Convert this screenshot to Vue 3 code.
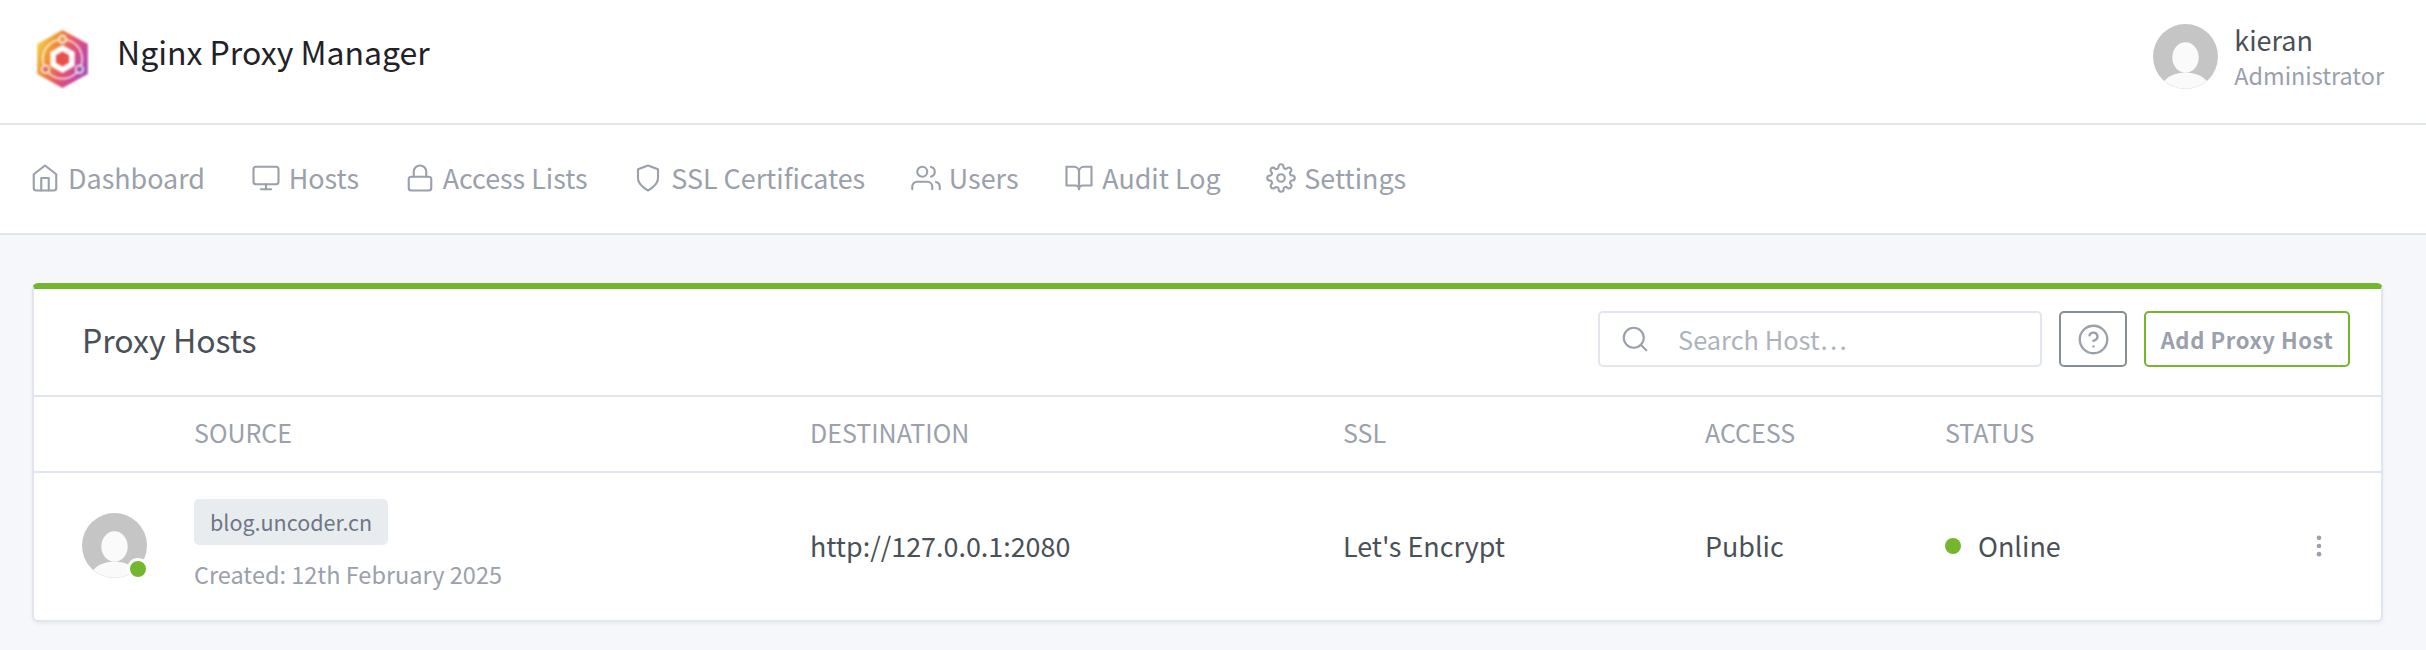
<script setup>
const navItems = [
  { label: 'Dashboard', paths: ['M3 9l9-7 9 7v11a2 2 0 0 1-2 2H5a2 2 0 0 1-2-2z', 'M9 22V12h6v10'] },
  { label: 'Hosts', paths: ['M4 3h16a2 2 0 0 1 2 2v10a2 2 0 0 1-2 2H4a2 2 0 0 1-2-2V5a2 2 0 0 1 2-2z', 'M8 21h8', 'M12 17v4'] },
  { label: 'Access Lists', paths: ['M5 11h14a2 2 0 0 1 2 2v7a2 2 0 0 1-2 2H5a2 2 0 0 1-2-2v-7a2 2 0 0 1 2-2z', 'M7 11V7a5 5 0 0 1 10 0v4'] },
  { label: 'SSL Certificates', paths: ['M12 22s8-4 8-10V5l-8-3-8 3v7c0 6 8 10 8 10z'] },
  { label: 'Users', paths: ['M17 21v-2a4 4 0 0 0-4-4H5a4 4 0 0 0-4 4v2', 'M13 7a4 4 0 1 1-8 0 4 4 0 0 1 8 0z', 'M23 21v-2a4 4 0 0 0-3-3.87', 'M16 3.13a4 4 0 0 1 0 7.75'] },
  { label: 'Audit Log', paths: ['M2 3h6a4 4 0 0 1 4 4v14a3 3 0 0 0-3-3H2z', 'M22 3h-6a4 4 0 0 0-4 4v14a3 3 0 0 1 3-3h7z'] },
  { label: 'Settings', paths: ['M15 12a3 3 0 1 1-6 0 3 3 0 0 1 6 0z', 'M19.4 15a1.65 1.65 0 0 0 .33 1.82l.06.06a2 2 0 0 1 0 2.83 2 2 0 0 1-2.83 0l-.06-.06a1.65 1.65 0 0 0-1.82-.33 1.65 1.65 0 0 0-1 1.51V21a2 2 0 0 1-2 2 2 2 0 0 1-2-2v-.09A1.65 1.65 0 0 0 9 19.4a1.65 1.65 0 0 0-1.82.33l-.06.06a2 2 0 0 1-2.83 0 2 2 0 0 1 0-2.83l.06-.06a1.65 1.65 0 0 0 .33-1.82 1.65 1.65 0 0 0-1.51-1H3a2 2 0 0 1-2-2 2 2 0 0 1 2-2h.09A1.65 1.65 0 0 0 4.6 9a1.65 1.65 0 0 0-.33-1.82l-.06-.06a2 2 0 0 1 0-2.83 2 2 0 0 1 2.83 0l.06.06a1.65 1.65 0 0 0 1.82.33H9a1.65 1.65 0 0 0 1-1.51V3a2 2 0 0 1 2-2 2 2 0 0 1 2 2v.09a1.65 1.65 0 0 0 1 1.51 1.65 1.65 0 0 0 1.82-.33l.06-.06a2 2 0 0 1 2.83 0 2 2 0 0 1 0 2.83l-.06.06a1.65 1.65 0 0 0-.33 1.82V9a1.65 1.65 0 0 0 1.51 1H21a2 2 0 0 1 2 2 2 2 0 0 1-2 2h-.09a1.65 1.65 0 0 0-1.51 1z'] }
]

const columns = ['', 'SOURCE', 'DESTINATION', 'SSL', 'ACCESS', 'STATUS', '']
</script>

<template>
  <div class="page">
    <header class="topbar">
      <div class="brand">
        <svg class="logo" viewBox="0 0 56 64">
          <defs>
            <linearGradient id="hexFill" x1="0" y1="0.25" x2="1" y2="0.75">
              <stop offset="0" stop-color="#f2cf4c" />
              <stop offset="0.28" stop-color="#ef8f33" />
              <stop offset="0.55" stop-color="#e4566a" />
              <stop offset="0.8" stop-color="#c9479c" />
              <stop offset="1" stop-color="#9a55b6" />
            </linearGradient>
          </defs>
          <g filter="blur(0.9px)">
            <path d="M28 1 L55 16 V48 L28 63 L1 48 V16 Z" fill="url(#hexFill)" />
            <circle cx="28" cy="32" r="21" fill="none" stroke="#fff" stroke-opacity="0.8" stroke-width="1.8" />
            <circle cx="28" cy="11" r="4" fill="#e8a25a" stroke="#fff" stroke-width="1.6" />
            <circle cx="10" cy="43" r="4" fill="#e0705e" stroke="#fff" stroke-width="1.6" />
            <circle cx="46" cy="43" r="4" fill="#9a5aa8" stroke="#fff" stroke-width="1.6" />
            <path d="M28 17 L41 24.5 V39.5 L28 47 L15 39.5 V24.5 Z" fill="#fff" />
            <path d="M28 24 L35 28 V36 L28 40 L21 36 V28 Z" fill="#e8504a" />
          </g>
        </svg>
        <span class="brand-name">Nginx Proxy Manager</span>
      </div>
      <div class="user">
        <svg class="avatar" viewBox="0 0 64 64">
          <circle cx="32" cy="32" r="32" fill="#c5c5c5" />
          <ellipse cx="32" cy="33" rx="13" ry="15" fill="#fafafa" />
          <path d="M11 56 C18 49 25 48 32 48 C39 48 46 49 53 56 A32 32 0 0 1 11 56 Z" fill="#fafafa" />
        </svg>
        <div class="user-text">
          <div class="user-name">kieran</div>
          <div class="user-role">Administrator</div>
        </div>
      </div>
    </header>

    <nav class="nav">
      <a v-for="item in navItems" :key="item.label" class="nav-link">
        <svg class="nav-icon" viewBox="0 0 24 24" fill="none" stroke="currentColor" stroke-width="1.7" stroke-linecap="round" stroke-linejoin="round">
          <path v-for="d in item.paths" :key="d" :d="d" />
        </svg>
        <span>{{ item.label }}</span>
      </a>
    </nav>

    <main class="content">
      <section class="card">
        <div class="card-header">
          <h3 class="card-title">Proxy Hosts</h3>
          <div class="card-actions">
            <div class="search">
              <svg class="search-icon" viewBox="0 0 24 24" fill="none" stroke="currentColor" stroke-width="1.7" stroke-linecap="round" stroke-linejoin="round">
                <path d="M19 11a8 8 0 1 1-16 0 8 8 0 0 1 16 0z" />
                <path d="M21 21l-4.35-4.35" />
              </svg>
              <span class="search-text">Search Host…</span>
            </div>
            <button class="btn-help">
              <svg viewBox="0 0 24 24" fill="none" stroke="currentColor" stroke-width="1.7" stroke-linecap="round" stroke-linejoin="round">
                <path d="M22 12a10 10 0 1 1-20 0 10 10 0 0 1 20 0z" />
                <path d="M9.09 9a3 3 0 0 1 5.83 1c0 2-3 3-3 3" />
                <path d="M12 17h.01" />
              </svg>
            </button>
            <button class="btn-add">Add Proxy Host</button>
          </div>
        </div>

        <div class="table-row table-head">
          <div v-for="(col, i) in columns" :key="i">{{ col }}</div>
        </div>

        <div class="table-row table-body">
          <div class="avatar-cell">
            <svg class="avatar" viewBox="0 0 64 64">
              <circle cx="32" cy="32" r="32" fill="#c5c5c5" />
              <ellipse cx="32" cy="33" rx="13" ry="15" fill="#fafafa" />
              <path d="M11 56 C18 49 25 48 32 48 C39 48 46 49 53 56 A32 32 0 0 1 11 56 Z" fill="#fafafa" />
            </svg>
            <span class="avatar-status"></span>
          </div>
          <div>
            <span class="tag">blog.uncoder.cn</span>
            <div class="created">Created: 12th February 2025</div>
          </div>
          <div>http://127.0.0.1:2080</div>
          <div>Let's Encrypt</div>
          <div>Public</div>
          <div class="status"><span class="status-dot"></span>Online</div>
          <div class="more">
            <svg viewBox="0 0 24 24" fill="#9aa0ac">
              <circle cx="12" cy="5" r="2" />
              <circle cx="12" cy="12" r="2" />
              <circle cx="12" cy="19" r="2" />
            </svg>
          </div>
        </div>
      </section>
    </main>
  </div>
</template>

<style scoped>
.page {
  width: 2426px;
  height: 650px;
  overflow: hidden;
  background: #f5f7fb;
  font-family: "Noto Sans CJK SC", "Noto Sans", sans-serif;
  color: #495057;
  font-size: 26.9px;
}

.topbar {
  height: 123px;
  background: #fff;
  border-bottom: 2px solid #e1e6ee;
  display: flex;
  align-items: center;
  justify-content: space-between;
  padding: 0 42px 0 36px;
}

.brand {
  display: flex;
  align-items: center;
  gap: 28px;
  margin-top: -6px;
}

.logo {
  width: 53px;
  height: 60px;
}

.brand-name {
  font-size: 32px;
  color: #1f2226;
  line-height: 48px;
  margin-bottom: 16px;
}

.user {
  display: flex;
  align-items: center;
  gap: 16px;
  margin-top: -10px;
}

.avatar {
  width: 65px;
  height: 65px;
  display: block;
}

.user-name {
  font-size: 27px;
  line-height: 36px;
  color: #495057;
}

.user-role {
  font-size: 23.4px;
  line-height: 34px;
  color: #9aa0ac;
}

.nav {
  height: 105px;
  padding-bottom: 3px;
  background: #fff;
  border-bottom: 2px solid #e1e6ee;
  display: flex;
  align-items: center;
  gap: 45.7px;
  padding-left: 30px;
}

.nav-link {
  display: flex;
  align-items: center;
  gap: 8px;
  color: #9aa0ac;
  font-size: 26.9px;
  line-height: 40px;
}

.nav-icon {
  width: 30px;
  height: 30px;
}

.content {
  padding: 48px 43px 0 32px;
}

.card {
  background: #fff;
  border: 2px solid #e1e6ee;
  border-top: 6px solid #74b72f;
  border-radius: 6px;
  box-shadow: 0 2px 4px rgba(0, 0, 0, 0.05);
}

.card-header {
  height: 100px;
  padding: 0 31px 6px 48px;
  display: flex;
  align-items: center;
  justify-content: space-between;
  border-bottom: 2px solid #e1e6ee;
}

.card-title {
  margin: 0;
  font-weight: 400;
  font-size: 32px;
  line-height: 44px;
  color: #495057;
}

.card-actions {
  display: flex;
  align-items: center;
  gap: 17px;
}

.search {
  width: 444px;
  height: 56px;
  box-sizing: border-box;
  border: 2px solid #e1e6ee;
  border-radius: 5px;
  display: flex;
  align-items: center;
  padding-left: 20px;
  gap: 28px;
}

.search-icon {
  width: 30px;
  height: 30px;
  color: #9aa0ac;
}

.search-text {
  color: #adb3bd;
  font-size: 25.4px;
}

.btn-help {
  width: 68px;
  height: 56px;
  box-sizing: border-box;
  padding: 0;
  background: #fff;
  border: 2px solid #868e96;
  border-radius: 5px;
  display: flex;
  align-items: center;
  justify-content: center;
  color: #9aa0ac;
}

.btn-help svg {
  width: 33px;
  height: 33px;
}

.btn-add {
  width: 206px;
  height: 56px;
  box-sizing: border-box;
  padding: 0;
  background: #fff;
  border: 2px solid #74b72f;
  border-radius: 5px;
  color: #9aa0ac;
  font-family: inherit;
  font-weight: 700;
  font-size: 22px;
  letter-spacing: 0.6px;
}

.table-row {
  display: grid;
  grid-template-columns: 160px 616px 533px 362px 240px 1fr 80px;
  align-items: center;
}

.table-head {
  height: 70px;
  padding-bottom: 4px;
  border-bottom: 2px solid #e1e6ee;
  color: #9aa0ac;
  font-size: 25px;
}

.table-body {
  height: 145px;
  padding-bottom: 2px;
  font-size: 26.9px;
}

.avatar-cell {
  position: relative;
  width: 65px;
  height: 65px;
  margin-left: 48px;
}

.avatar-status {
  position: absolute;
  right: -2px;
  bottom: -2px;
  width: 16px;
  height: 16px;
  background: #74b72f;
  border: 3px solid #fff;
  border-radius: 50%;
}

.tag {
  display: inline-block;
  background: #e9ecef;
  color: #6e7687;
  font-size: 21.5px;
  line-height: 46px;
  padding: 0 16px;
  border-radius: 5px;
}

.created {
  margin-top: 11px;
  color: #9aa0ac;
  font-size: 23.5px;
  line-height: 36px;
}

.status {
  display: flex;
  align-items: center;
  gap: 17px;
}

.status-dot {
  width: 16px;
  height: 16px;
  background: #74b72f;
  border-radius: 50%;
}

.more svg {
  width: 28px;
  height: 28px;
  display: block;
}

.more {
  margin-left: 4px;
}
</style>

<style>
html,
body {
  margin: 0;
  background: #f5f7fb;
}
</style>
